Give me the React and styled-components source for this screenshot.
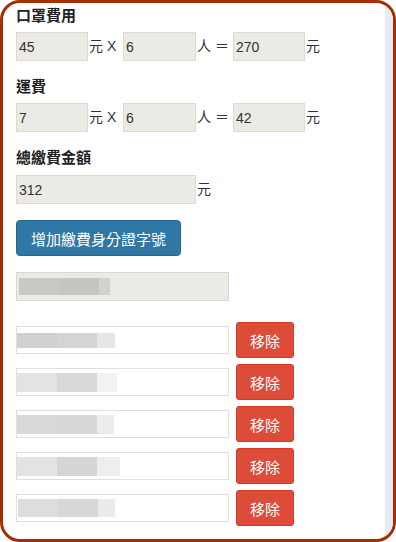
import styled, { createGlobalStyle } from "styled-components";

const Global = createGlobalStyle`
  html, body {
    margin: 0;
    padding: 0;
    background: #fff;
  }
  * {
    box-sizing: border-box;
  }
`;

const Frame = styled.div`
  width: 396px;
  height: 542px;
  border: 3px solid #a52f04;
  border-radius: 20px;
  overflow: hidden;
  display: flex;
  background: #fff;
  font-family: "Liberation Sans", "Noto Sans CJK TC", sans-serif;
  color: #333;
`;

const Content = styled.div`
  flex: 1;
  padding: 3px 0 0 13px;
`;

const Track = styled.div`
  width: 8px;
  background: #e8ecf2;
`;

const Label = styled.div`
  font-size: 15px;
  font-weight: bold;
  line-height: 20px;
  margin-top: ${(p) => p.$top || 0}px;
  margin-bottom: ${(p) => p.$bottom || 6}px;
  color: #222;
`;

const Row = styled.div`
  display: flex;
  align-items: center;
  height: 29px;
`;

const Input = styled.input`
  width: ${(p) => p.$w || 72}px;
  height: 29px;
  padding: 0 2px;
  font-family: inherit;
  font-size: 14px;
  color: #333;
  background: #ebeae4;
  border: 1px solid #dcdbd4;
  border-radius: 0;
  outline: none;
`;

const Unit = styled.span`
  display: inline-block;
  width: ${(p) => p.$w || 20}px;
  padding-left: 1px;
  font-size: 14px;
  line-height: 29px;
  white-space: pre;
  color: #333;
`;

const AddButton = styled.button`
  display: block;
  margin-top: 16px;
  height: 36px;
  padding: 0 14px;
  background: #2f78a5;
  border: 1px solid #28698f;
  border-radius: 4px;
  color: #fff;
  font-family: inherit;
  font-size: 15px;
`;

const Field = styled.div`
  width: 213px;
  height: ${(p) => (p.$grey ? 29 : 28)}px;
  display: flex;
  align-items: center;
  padding-left: ${(p) => p.$pad || 0}px;
  background: ${(p) => (p.$grey ? "#ebeae4" : "#fff")};
  border: 1px solid ${(p) => (p.$grey ? "#d9d8d2" : "#e0e0e0")};
  margin-top: ${(p) => p.$top || 0}px;
`;

const Blur = styled.span`
  display: block;
  width: ${(p) => p.$w}px;
  height: ${(p) => p.$h || 15}px;
  background: ${(p) => p.$c};
`;

const List = styled.div`
  margin-top: 21px;
  display: flex;
  flex-direction: column;
  gap: 6px;
`;

const IdRow = styled.div`
  display: flex;
  align-items: center;
  gap: 7px;
`;

const RemoveButton = styled.button`
  width: 58px;
  height: 36px;
  padding: 0;
  background: #dd4b39;
  border: 1px solid #d73925;
  border-radius: 3px;
  color: #fff;
  font-family: inherit;
  font-size: 15px;
`;

const rows = [
  { pad: 0, h: 15, blocks: [[40, "#d0d0d0"], [40, "#d4d4d4"], [18, "#e6e6e6"]] },
  { pad: 0, h: 19, blocks: [[40, "#e3e3e3"], [40, "#d9d9d9"], [20, "#f2f2f2"]] },
  { pad: 0, h: 19, blocks: [[40, "#d9d9d9"], [40, "#d8d8d8"], [17, "#ececec"]] },
  { pad: 0, h: 19, blocks: [[40, "#e3e3e3"], [40, "#d6d6d6"], [23, "#eeeeee"]] },
  { pad: 1, h: 18, blocks: [[40, "#dddddd"], [40, "#d8d8d8"], [17, "#ebebeb"]] },
];

function App() {
  return (
    <>
      <Global />
      <Frame>
        <Content>
          <Label>口罩費用</Label>
          <Row>
            <Input defaultValue="45" />
            <Unit $w={35}>元 X</Unit>
            <Input $w={73} defaultValue="6" />
            <Unit $w={37}>人 ＝</Unit>
            <Input defaultValue="270" />
            <Unit>元</Unit>
          </Row>

          <Label $top={16}>運費</Label>
          <Row>
            <Input defaultValue="7" />
            <Unit $w={35}>元 X</Unit>
            <Input $w={73} defaultValue="6" />
            <Unit $w={37}>人 ＝</Unit>
            <Input defaultValue="42" />
            <Unit>元</Unit>
          </Row>

          <Label $top={16} $bottom={7}>總繳費金額</Label>
          <Row>
            <Input $w={180} defaultValue="312" />
            <Unit>元</Unit>
          </Row>

          <AddButton type="button">增加繳費身分證字號</AddButton>

          <Field $grey $top={16} $pad={2}>
            <Blur $w={40} $h={17} $c="#c9c9c3" />
            <Blur $w={40} $h={17} $c="#c6c6c0" />
            <Blur $w={11} $h={17} $c="#d3d3ce" />
          </Field>

          <List>
            {rows.map((r, i) => (
              <IdRow key={i}>
                <Field $pad={r.pad}>
                  {r.blocks.map(([w, c], j) => (
                    <Blur key={j} $w={w} $h={r.h} $c={c} />
                  ))}
                </Field>
                <RemoveButton type="button">移除</RemoveButton>
              </IdRow>
            ))}
          </List>
        </Content>
        <Track />
      </Frame>
    </>
  );
}

export default App;
